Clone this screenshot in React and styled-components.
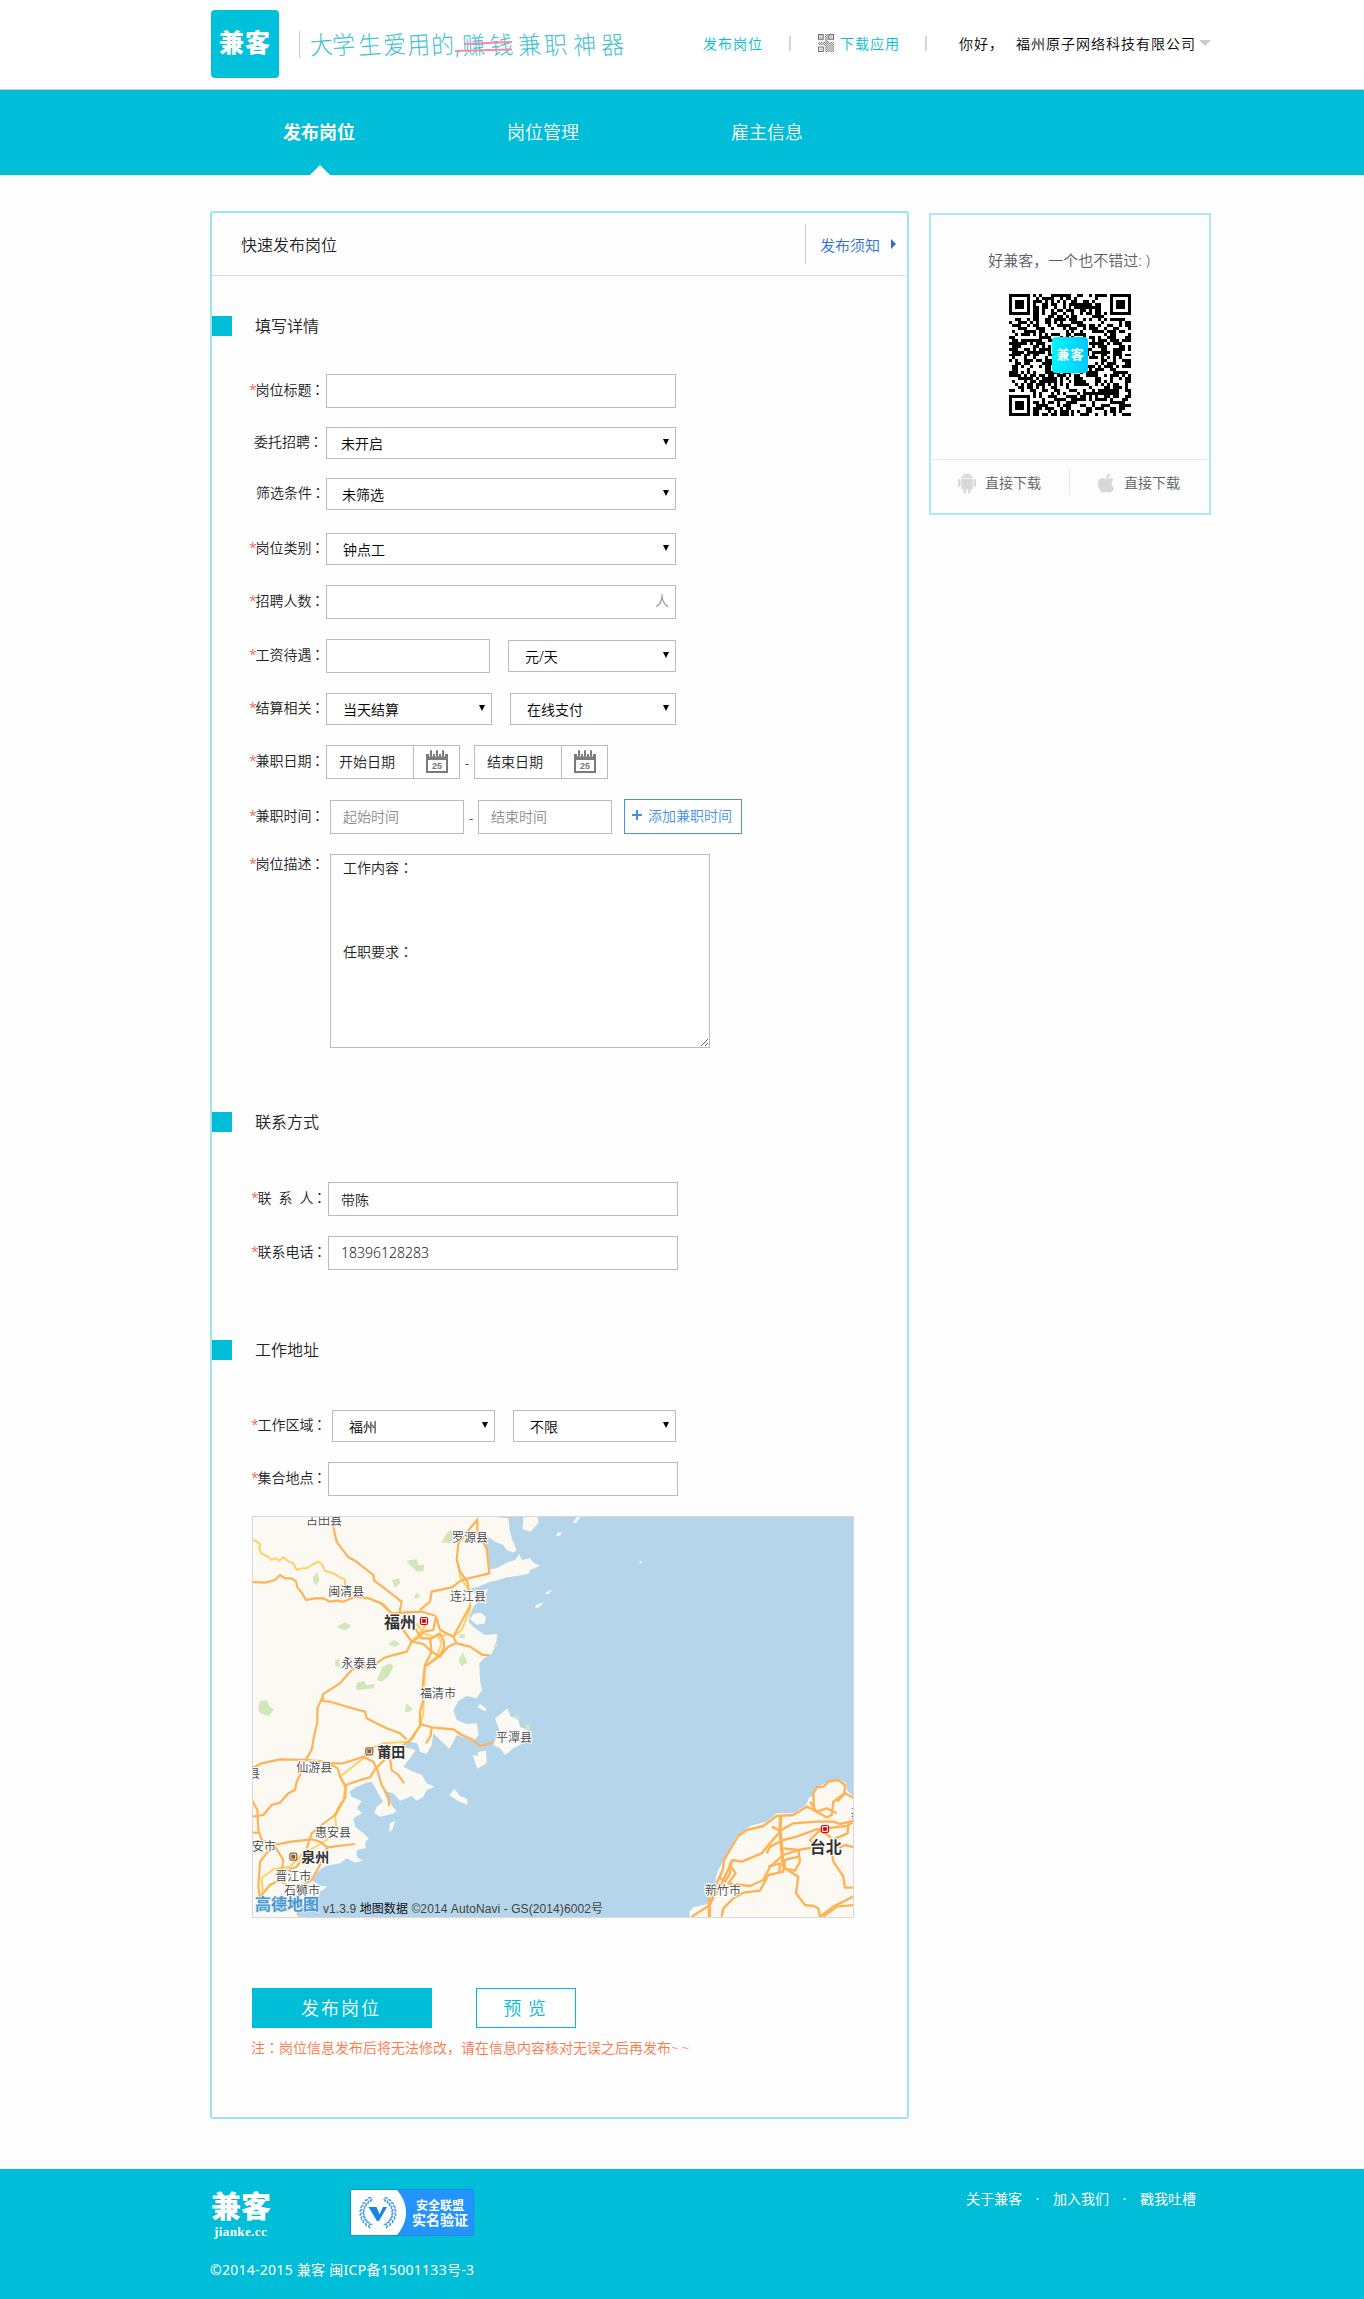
import React from "react";
import styled, { createGlobalStyle } from "styled-components";
import { AiFillAndroid, AiFillApple } from "react-icons/ai";

const CYAN = "#00bdd8";
const SANS = '"Noto Sans", "Noto Sans CJK SC", sans-serif';
const CJK_COLON = '"Noto Sans CJK JP", "Noto Sans CJK SC", sans-serif';

const Global = createGlobalStyle`
  *, *::before, *::after { box-sizing: border-box; }
  body { margin: 0; background: #fdfdfd; font-family: ${SANS}; font-size: 14px; font-weight: 350; color: #222; }
  input, textarea, button { font: inherit; margin: 0; }
`;

/* ---------- header ---------- */
const Header = styled.header`
  height: 90px;
  background: #fff;
  border-bottom: 1px solid #ccc;
  display: flex;
  padding: 10px 0 0 211px;
`;
const Logo = styled.div`
  width: 68px;
  height: 68px;
  border-radius: 4px;
  background: #00c1dc;
  color: #fff;
  font-weight: 900;
  font-size: 25px;
  letter-spacing: 1px;
  line-height: 65px;
  text-align: center;
`;
const Slogan = styled.div`
  margin: 21px 0 0 20px;
  width: 328px;
  height: 27px;
  border-left: 1px solid #ccc;
  padding-left: 9px;
  display: flex;
  font-size: 25px;
  line-height: 26px;
  color: #45bfd3;
  font-weight: 300;
  white-space: nowrap;
`;
const Glyph = styled.span`
  width: ${(p) => p.$w}px;
  transform: rotate(-4deg) scaleX(0.92);
`;
const Struck = styled.span`
  position: relative;
  display: flex;
  svg { position: absolute; left: -7px; top: 9px; }
`;
const TopNav = styled.nav`
  display: flex;
  align-items: center;
  height: 24px;
  margin: 21px 0 0 76px;
  letter-spacing: 1px;
  color: ${CYAN};
`;
const Bar = styled.i`
  width: 2px;
  height: 15px;
  background: #d8d4d6;
  margin: 0 ${(p) => p.$r}px 0 ${(p) => p.$l}px;
`;
const AppLink = styled.span`
  display: flex;
  align-items: center;
  gap: 6px;
  width: 82px;
`;
const Company = styled.span`
  display: flex;
  align-items: center;
  color: #000;
  span { width: 57px; }
`;
const Caret = styled.i`
  margin-left: 3px;
  border: 6px solid transparent;
  border-top-color: #ccc;
  border-bottom: 0;
`;
const MainNav = styled.nav`
  height: 85px;
  background: ${CYAN};
  display: flex;
  padding-left: 207px;
`;
const Tab = styled.a`
  position: relative;
  width: 224px;
  text-align: center;
  color: #fff;
  font-size: 18px;
  line-height: 84px;
  font-weight: ${(p) => (p.$active ? 700 : 350)};
  &::after {
    content: "";
    display: ${(p) => (p.$active ? "block" : "none")};
    position: absolute;
    left: 103px;
    bottom: 0;
    border: 10px solid transparent;
    border-bottom-color: #fdfdfd;
    border-top: 0;
  }
`;

/* ---------- page body ---------- */
const Main = styled.main`
  display: flex;
  align-items: flex-start;
  height: 1994px;
  padding: 36px 0 0 210px;
`;
const Panel = styled.section`
  width: 699px;
  height: 1908px;
  border: 2px solid #9de6ef;
  border-radius: 3px;
  background: #fefefe;
`;
const PanelHead = styled.div`
  height: 63px;
  border-bottom: 1px solid #ddd;
  margin-right: 1px;
  display: flex;
  align-items: center;
  justify-content: space-between;
  padding: 1px 10px 1px 29px;
  font-size: 16px;
`;
const Notice = styled.a`
  display: flex;
  align-items: center;
  height: 40px;
  border-left: 1px solid #ccc;
  padding-left: 14px;
  font-size: 15px;
  color: #2a6fdb;
  i {
    margin-left: 11px;
    border: 5px solid transparent;
    border-left-color: #2a6fdb;
    border-right: 0;
  }
`;
const SectionTitle = styled.h2`
  display: flex;
  align-items: center;
  height: 20px;
  margin: ${(p) => p.$top}px 0 0;
  padding-bottom: 2px;
  font-size: 16px;
  font-weight: 350;
  &::before {
    content: "";
    width: 20px;
    height: 20px;
    background: ${CYAN};
    margin: 0 23px -2px 0;
  }
`;
const Row = styled.div`
  display: flex;
  align-items: ${(p) => p.$align || "center"};
  height: ${(p) => p.$h || 34}px;
  margin-top: ${(p) => p.$top || 20}px;
`;
const LabelBox = styled.label`
  flex: none;
  width: ${(p) => p.$w}px;
  padding-left: ${(p) => p.$pad}px;
  height: 22px;
  line-height: 18px;
  white-space: pre;
  b { display: inline-block; width: 6.5px; font-weight: 350; color: #f5392c; }
  span { font-family: ${CJK_COLON}; margin-left: -1px; }
`;
const Input = styled.input`
  width: ${(p) => p.$w}px;
  height: 34px;
  border: 1px solid #bbb;
  background: #fff;
  padding: 0 12px 1px;
  color: #222;
  outline: 0;
  &::placeholder { color: #8c8c8c; opacity: 1; }
`;
const Unit = styled.div`
  width: 350px;
  height: 34px;
  border: 1px solid #bbb;
  background: #fff;
  color: #888;
  text-align: right;
  padding: 0 6px;
  line-height: 29px;
`;
const SelectBox = styled.div`
  width: ${(p) => p.$w}px;
  height: 32px;
  border: 1px solid #bbb;
  background: #fff;
  display: flex;
  align-items: center;
  justify-content: space-between;
  padding: 0 6px 0 ${(p) => p.$pad || 16}px;
  color: #000;
  i {
    margin-top: -2px;
    border: 3px solid transparent;
    border-top: 6px solid #000;
    border-bottom: 0;
  }
`;
const Gap = styled.span`
  width: ${(p) => p.$w}px;
  text-align: center;
`;
const DateBox = styled.div`
  width: 134px;
  height: 34px;
  border: 1px solid #bbb;
  background: #fff;
  display: flex;
  align-items: center;
  padding-left: 12px;
  > span { width: 74px; margin-top: -2px; }
  > i {
    width: 46px;
    height: 32px;
    border-left: 1px solid #bbb;
    padding: 4px 0 0 12px;
  }
  svg { display: block; }
`;
const AddButton = styled.button`
  width: 118px;
  height: 35px;
  margin: -1px 0 0 12px;
  border: 1px solid #4a90e2;
  background: #fff;
  color: #4a90e2;
  padding: 0 0 3px 7px;
  display: flex;
  align-items: center;
  gap: 6px;
`;
const TextArea = styled.textarea`
  width: 380px;
  height: 194px;
  border: 1px solid #bbb;
  background: #fff;
  padding: 2px 12px 0;
  line-height: 21px;
  color: #222;
  outline: 0;
  font-family: ${CJK_COLON};
`;
const MapFrame = styled.div`
  width: 602px;
  height: 402px;
  margin: 20px 0 0 40px;
  border: 1px solid #d9d9d9;
  svg { display: block; }
`;
const Actions = styled.div`
  display: flex;
  gap: 44px;
  margin: 70px 0 0 40px;
`;
const Action = styled.button`
  width: ${(p) => (p.$primary ? 180 : 100)}px;
  height: 40px;
  border: 1px solid ${CYAN};
  background: ${(p) => (p.$primary ? CYAN : "#fff")};
  color: ${(p) => (p.$primary ? "#fff" : CYAN)};
  font-size: 18px;
  letter-spacing: ${(p) => (p.$primary ? 2 : 1)}px;
  padding: 0 2px 0 0;
  line-height: 36px;
`;
const Warn = styled.p`
  margin: 9px 0 0 39px;
  line-height: 20px;
  color: #ff7647;
  span { font-family: ${CJK_COLON}; }
  i { font-style: normal; letter-spacing: 2.5px; }
`;

/* ---------- side card ---------- */
const Card = styled.aside`
  width: 282px;
  height: 302px;
  margin: 2px 0 0 20px;
  border: 2px solid #b1e9f1;
  color: #5c5c66;
  display: flex;
  flex-direction: column;
  align-items: center;
`;
const CardText = styled.div`
  margin: 33px 2px 0 0;
  font-size: 15px;
  line-height: 24px;
`;
const QrWrap = styled.div`
  display: grid;
  place-items: center;
  margin: 22px 0 43px;
  > * { grid-area: 1 / 1; }
`;
const QrLogo = styled.div`
  width: 36px;
  height: 36px;
  border-radius: 4px;
  background: linear-gradient(90deg, #00f6ff, #00c8ff);
  color: #fff;
  font-weight: 700;
  font-size: 13px;
  letter-spacing: 1px;
  padding-left: 1px;
  line-height: 34px;
  text-align: center;
`;
const Downloads = styled.div`
  width: 278px;
  border-top: 1px solid #eaeaea;
  display: flex;
  padding-top: 10px;
`;
const Download = styled.a`
  width: ${(p) => (p.$first ? 139 : 138)}px;
  height: 25px;
  border-right: ${(p) => (p.$first ? "1px solid #eaeaea" : "0")};
  padding-left: 24px;
  display: flex;
  align-items: center;
  gap: 6px;
  svg { color: #d8d8d8; }
  span { margin-top: -1px; }
`;

/* ---------- footer ---------- */
const Footer = styled.footer`
  height: 130px;
  background: ${CYAN};
  color: #fff;
  font-weight: 400;
  display: flex;
  justify-content: space-between;
  padding: 19px 167px 0 210px;
`;
const FooterBrands = styled.div`
  display: flex;
  height: 49px;
`;
const FooterLogo = styled.div`
  width: 140px;
  padding-left: 1px;
  font-size: 30px;
  font-weight: 900;
  line-height: 35px;
  small {
    display: block;
    padding-left: 3px;
    margin-top: 2px;
    font: 600 13px/14px "Liberation Serif", serif;
    letter-spacing: 0.4px;
  }
`;
const Badge = styled.div`
  width: 124px;
  height: 47px;
  margin-top: 1px;
  border: 1px solid #1f8ae6;
  border-radius: 2px;
  background: #2593fc;
  display: flex;
  align-items: center;
  overflow: hidden;
  font-weight: 700;
  div { padding-left: 6px; text-align: center; }
  p { margin: 0; font-size: 12px; line-height: 15px; }
  p + p { font-size: 14px; line-height: 14px; }
`;
const Copyright = styled.div`
  margin-top: 23px;
  line-height: 20px;
  letter-spacing: 0.27px;
`;
const FooterLinks = styled.div`
  display: flex;
  height: 22px;
  line-height: 22px;
  padding-right: 1px;
  span { width: 31px; text-align: center; }
`;

/* ---------- drawings ---------- */
function SmallQr() {
  const dots = [];
  for (let y = 0; y < 16; y++)
    for (let x = 0; x < 14; x++)
      if (!((x < 6 && y < 7) || (x > 8 && y < 7) || (x < 6 && y > 9)) && (x + y) % 2 === 0)
        dots.push(<rect key={x + "-" + y} x={x} y={y} width="1" height="1" />);
  return (
    <svg width="16" height="18" viewBox="0 0 14 16" fill="#707070" preserveAspectRatio="none">
      {dots}
      {[[0, 0], [9, 0], [0, 11]].map(([x, y]) => (
        <g key={x + "," + y}>
          <path fillRule="evenodd" d={`M${x} ${y}h5v5h-5zM${x + 1} ${y + 1}v3h3v-3z`} />
          <rect x={x + 2} y={y + 2} width="1" height="1" />
        </g>
      ))}
    </svg>
  );
}

const QR_SIZE = 41;
const inFinder = (x, y) => (x < 8 && y < 8) || (x > 32 && y < 8) || (x < 8 && y > 32);
function QrCode() {
  let seed = 20150411;
  let d = "";
  for (let y = 0; y < QR_SIZE; y++)
    for (let x = 0; x < QR_SIZE; x++) {
      seed = (seed * 16807) % 2147483647;
      if (!inFinder(x, y) && seed / 2147483647 > 0.48) d += `M${x} ${y}h1v1h-1z`;
    }
  return (
    <svg width="122" height="122" viewBox="0 0 41 41" shapeRendering="crispEdges">
      <rect width="41" height="41" fill="#fff" />
      <path d={d} />
      {[[0, 0], [34, 0], [0, 34]].map(([x, y]) => (
        <g key={x + "," + y}>
          <path fillRule="evenodd" d={`M${x} ${y}h7v7h-7zM${x + 1} ${y + 1}v5h5v-5z`} />
          <rect x={x + 2} y={y + 2} width="3" height="3" />
        </g>
      ))}
    </svg>
  );
}

function Calendar() {
  return (
    <svg width="22" height="24" viewBox="0 0 22 24">
      <path d="M0 4h22v19H0z M2 10v11h18V10z" fill="#7b7b7b" fillRule="evenodd" />
      <path d="M5 1.500v5M11 1.500v5M17 1.500v5" stroke="#fff" strokeWidth="4" />
      <path d="M5 1v5M11 1v5M17 1v5" stroke="#7b7b7b" strokeWidth="2" strokeLinecap="round" />
      <text x="11" y="19" fontSize="9" fontWeight="700" fontStyle="normal" fontFamily="Liberation Sans, sans-serif" fill="#777" textAnchor="middle">25</text>
    </svg>
  );
}

function Wreath() {
  const leaves = [];
  for (let i = 0; i < 10; i++) {
    const a = ((-62 + i * 13.5) * Math.PI) / 180;
    for (const s of [-1, 1])
      for (const r of [14.5, 17.5]) {
        const x = 27 + s * Math.cos(a) * r;
        const y = 22.5 + Math.sin(a) * r * 0.95;
        const turn = (Math.atan2(Math.sin(a), s * Math.cos(a)) * 180) / Math.PI + 90 + s * (r > 16 ? -28 : 28);
        leaves.push(<ellipse key={i + "_" + s + "_" + r} cx={x} cy={y} rx="2" ry="0.9" transform={`rotate(${turn} ${x} ${y})`} />);
      }
  }
  return (
    <svg width="55" height="45">
      <path d="M0 0H46C58 14 58 31 46 45H0Z" fill="#fff" />
      <g fill="#4d9fe6">{leaves}</g>
      <path d="M17.500 17H25.500L28.500 24.500L32 17H36L28 31H26Z" fill="#1684e0" />
    </svg>
  );
}

/* Map artwork is digitised at three units per pixel. */
const MAINLAND =
  "36,48 735,48 805,55 808,85 815,115 830,150 820,158 800,150 790,135 765,125 745,110 722,100 735,125 745,170 750,208 770,205 800,188 825,180 838,162 845,180 870,175 882,190 900,196 885,205 870,210 865,222 830,228 800,232 775,240 750,245 715,260 692,265 705,280 730,272 745,265 735,290 740,312 715,305 700,320 690,345 685,365 705,385 735,405 772,402 768,432 755,462 735,472 718,490 720,540 726,570 710,595 680,588 655,603 640,630 650,660 680,672 710,670 716,706 700,722 670,712 650,705 640,725 628,746 600,720 580,700 575,735 560,762 540,755 532,730 505,725 492,742 527,750 510,775 490,800 520,815 545,824 560,850 584,860 560,870 550,890 530,902 515,888 500,895 480,902 460,880 430,872 440,895 470,935 455,942 420,950 403,940 410,920 430,905 420,890 405,862 395,846 380,848 350,860 328,875 335,890 365,903 350,925 367,940 340,955 345,980 370,1000 386,1015 375,1030 378,1045 350,1050 350,1070 368,1082 345,1088 320,1075 300,1090 260,1097 245,1105 230,1120 215,1140 240,1157 262,1160 240,1175 235,1195 200,1200 175,1235 172,1254 36,1254";
const ISLANDS = [
  "690,358 700,342 722,338 738,350 735,370 710,374",
  "765,655 785,640 802,625 812,650 835,658 840,680 862,690 878,700 860,725 845,732 820,745 796,765 780,745 760,735 770,710 778,690",
  "698,765 712,768 715,755 738,752 740,790 712,806",
  "628,885 643,867 660,888 682,897 682,915 655,903",
  "848,88 850,52 892,50 896,68 872,95",
  "448,996 450,970 466,962 456,990",
  "885,325 888,315 910,307 898,322",
  "917,282 920,275 937,270 925,282",
  "712,622 720,612 740,628 735,634",
];
const GREENS = [
  "605,128 620,98 632,92 650,100 636,128",
  "500,182 530,178 535,195 553,195 550,214 530,214 512,198",
  "455,240 478,235 480,250 465,264",
  "218,232 232,216 238,240 230,257 220,246",
  "292,380 315,366 334,378 318,390 300,386",
  "445,432 463,420 480,432 465,442",
  "522,288 533,278 540,292 526,296",
  "410,540 428,500 450,490 460,500 445,530 425,545",
  "348,568 350,548 372,543 380,556 403,552 402,565 376,568 358,570",
  "54,625 60,603 80,601 90,620 102,628 85,648 60,640",
  "285,482 297,476 300,500 287,500",
  "655,482 668,456 682,488 665,497",
  "495,635 498,610 520,628 505,636",
  "760,440 768,428 774,436 763,446",
  "658,415 660,402 674,402 674,415",
  "856,688 858,671 870,674 868,690",
  "820,652 828,645 838,652 832,660",
];
const YELLOW_ROADS = [
  "36,118 50,125 60,132 58,148 64,160 80,168 95,180 105,174 118,182 130,172 145,184 160,190 170,210 185,205 200,205 215,195 235,185 245,192 255,213 280,220 300,232 315,238 315,262 290,290",
  "395,300 430,312 450,335",
  "655,190 660,230 690,275 690,330 665,390 640,410",
  "560,370 540,400 510,430",
  "590,400 605,430 590,470 555,500 550,640 540,680 505,725 430,730 400,742 370,775 300,830 315,860 310,905 285,950 290,985 260,1020 210,1050",
  "200,1050 150,1100 100,1108 65,1135 70,1200",
  "530,370 550,400 580,410 620,405",
];
const ORANGE_ROADS = [
  "280,80 290,125 325,172 345,182 400,225 403,243 440,270 485,305 478,340",
  "36,246 75,248 105,240 120,225 135,235 155,235 168,244 172,262 185,278 198,300 225,295 250,295 270,305 290,302 310,305 345,290 385,295 420,308 455,340 500,337 545,335 588,348",
  "540,330 570,305 575,275 635,262 665,240 748,220 740,145 712,100 712,55",
  "712,60 690,85 655,130 650,180 660,215 682,245 690,290",
  "692,315 670,355 640,410 600,390 588,350",
  "640,410 650,430 690,440 728,465 748,465",
  "335,510 300,550 248,583 248,603 270,605 345,627 375,635 380,655 400,665 440,685 480,700 500,718",
  "248,590 232,625 232,665 222,710 215,750 190,790 180,825 170,845 165,870 145,880 120,908 95,915 70,945 36,950",
  "335,508 400,498 430,475 450,468 500,455 515,425 490,390 480,360",
  "515,425 550,432 575,455 600,470 625,440 650,428",
  "588,350 580,390 550,395 540,410 515,425",
  "525,385 545,415 575,415 600,400 612,425 612,445 597,470 555,500",
  "570,415 575,455 555,495 548,555 550,600 540,635 540,675 515,718",
  "540,672 575,682 640,688 665,705 695,718 720,738 758,728",
  "575,682 572,708 558,730",
  "36,805 65,790 120,778 200,780 240,783 265,790 310,790 370,770 400,785 412,810 425,855 445,890 447,918",
  "515,718 475,745 435,778 405,808 390,832 355,842 318,855 315,895 300,915 285,945 245,975 215,1000 200,1045",
  "450,775 455,810 475,825 493,850",
  "265,790 293,805 300,830 318,860",
  "36,900 52,930 55,990 65,1020 100,1035 155,1025 215,1018 240,1025 262,1042 345,1032",
  "36,998 60,998",
  "105,1040 130,1080 125,1115 170,1100 200,1060",
  "100,1035 60,1085 55,1160 60,1195",
  "60,1190 90,1155 120,1140 155,1165 175,1245",
  "262,1042 240,1095 215,1140 170,1165",
];
const TAIWAN =
  "420,1254 418,1235 430,1222 470,1213 495,1180 498,1130 505,1110 518,1085 540,1048 560,1008 600,978 650,965 680,940 730,940 768,915 778,892 790,888 792,870 830,845 865,837 888,848 890,870 914,895 914,1254";
const TAIWAN_ROADS = [
  "425,1250 480,1215 500,1150 518,1110 522,1080 540,1050 565,1008 590,990 640,978 680,948 730,945 770,920 792,930 790,880 800,862 820,860 835,845 865,840 885,855 883,880 850,905 845,945 830,952 790,930",
  "480,1250 478,1215 515,1150 548,1080 575,1085 635,1060 660,1030 690,995",
  "665,980 690,992 730,970 800,965 850,965 870,972 912,962",
  "650,1060 660,1040 700,1020 740,1010 800,988 890,978 912,965",
  "545,1082 540,1095 557,1120 535,1150 600,1158 640,1140 660,1100 700,1065 745,1050 790,1042",
  "515,1250 520,1225 550,1195 580,1178 630,1172 655,1125 700,1115 705,1080 745,1070",
  "700,1080 705,1105 745,1130 738,1180 765,1215 790,1218 805,1225 810,1250 850,1220 880,1205 912,1188",
  "780,905 800,935 830,925 860,940",
  "862,905 885,880 912,895",
  "800,1045 780,1020 810,990 840,1010 850,1085 880,1130 885,1163 912,1163",
  "895,970 893,1000 850,1018",
  "865,1045 885,1035 912,1042",
  "505,1130 525,1145 540,1120 540,1090",
  "655,1100 690,1090 688,1115",
  "820,1250 860,1220 912,1215",
  "700,1045 745,1050 750,1085 735,1112 700,1105",
];
const LABELS = [
  [198, 74, "古田县"], [636, 125, "罗源县"], [265, 288, "闽清县"], [630, 303, "连江县"],
  [304, 504, "永泰县"], [540, 595, "福清市"], [768, 727, "平潭县"], [169, 817, "仙游县"],
  [24, 833, "县"], [225, 1011, "惠安县"], [36, 1053, "安市"], [106, 1143, "晋江市"],
  [132, 1186, "石狮市"], [1395, 1186, "新竹市"], [1832, 953, "基"],
];
const CITIES = [
  [432, 384, "福州", 16], [412, 770, "莆田", 14], [184, 1085, "泉州", 14], [1709, 1058, "台北", 16],
];

function Roads({ list, color, width }) {
  return (
    <g fill="none" stroke={color} strokeWidth={width} strokeLinejoin="round">
      {list.map((r) => <path key={r} d={"M" + r} />)}
    </g>
  );
}

function Pin({ x, y, color }) {
  return (
    <g transform={`translate(${x / 3 - 13} ${y / 3 - 17})`} fill="#fff" stroke={color}>
      <rect x="-3.5" y="-3.5" width="7" height="7" rx="1.5" strokeWidth="1.2" />
      <rect x="-1.7" y="-1.7" width="3.4" height="3.4" fill={color} strokeWidth="0.5" />
    </g>
  );
}

function CoastMap() {
  return (
    <svg width="600" height="400" viewBox="0 0 600 400" fontFamily={'"Noto Sans CJK SC", sans-serif'}>
      <rect width="600" height="400" fill="#b5d5ea" />
      <g transform="translate(-13 -17) scale(0.33333)">
        <g fill="#fcf9f2">
          <polygon points={MAINLAND} />
          {ISLANDS.map((p) => <polygon key={p} points={p} />)}
        </g>
        <g fill="#cfe7ba">{GREENS.map((p) => <polygon key={p} points={p} />)}</g>
        <Roads list={YELLOW_ROADS} color="#ffd066" width="6" />
        <Roads list={ORANGE_ROADS} color="#ffb155" width="6.5" />
      </g>
      <g transform="translate(297 -17) scale(0.33333)">
        <polygon points={TAIWAN} fill="#fcf9f2" />
        <g fill="#fcf9f2">
          <polygon points="69,68 80,50 90,52 78,70" />
          <polygon points="18,108 22,98 37,97 30,107" />
          <polygon points="266,190 272,182 277,190" />
        </g>
        <Roads list={TAIWAN_ROADS} color="#ffb155" width="7" />
        <path d="M692 945L690 990L700 1100M478 1195V1250" stroke="#ffb155" strokeWidth="10" fill="none" />
      </g>
      <Pin x={552} y={363} color="#d00" />
      <Pin x={1755} y={987} color="#d00" />
      <Pin x={388} y={754} color="#8a5a2a" />
      <Pin x={160} y={1070} color="#8a5a2a" />
      <g fill="#444" stroke="#fff" strokeWidth="2" paintOrder="stroke" fontSize="12" fontWeight="350">
        {LABELS.map(([x, y, t]) => <text key={t + x} x={x / 3 - 13} y={y / 3 - 17}>{t}</text>)}
      </g>
      <g fill="#333" stroke="#fff" strokeWidth="2" paintOrder="stroke" fontWeight="700">
        {CITIES.map(([x, y, t, size]) => <text key={t} x={x / 3 - 13} y={y / 3 - 17} fontSize={size}>{t}</text>)}
      </g>
      <text x="2" y="393" fontSize="16" fontWeight="700" fill="#4b97cf" stroke="#dceefa" strokeWidth="1.5" paintOrder="stroke">高德地图</text>
      <text x="70" y="396" fontSize="12" fill="#444" fontWeight="400" textLength="280" fontFamily={'"Liberation Sans", "Noto Sans CJK SC", sans-serif'}>
        v1.3.9 <tspan fill="#111">地图数据</tspan> ©2014 AutoNavi - GS(2014)6002号
      </text>
    </svg>
  );
}

/* ---------- form pieces ---------- */
function Label({ children, star = true, pad = 37, w = 114 }) {
  return (
    <LabelBox $pad={pad} $w={w}>
      {star && <b>*</b>}
      {children}
      <span>：</span>
    </LabelBox>
  );
}
function Select({ w = 350, pad, children }) {
  return (
    <SelectBox $w={w} $pad={pad}>
      {children}
      <i />
    </SelectBox>
  );
}
function DatePick({ children }) {
  return (
    <DateBox>
      <span>{children}</span>
      <i><Calendar /></i>
    </DateBox>
  );
}

const SLOGAN_START = [["大", 22], ["学", 26], ["生", 25], ["爱", 24], ["用", 24], ["的", 24], [",", 7]];
const SLOGAN_END = [["兼", 26], ["职", 29], ["神", 28], ["器", 24]];

export default function App() {
  return (
    <>
      <Global />
      <Header>
        <Logo>兼客</Logo>
        <Slogan>
          {SLOGAN_START.map(([c, w]) => <Glyph key={c} $w={w}>{c}</Glyph>)}
          <Struck>
            <Glyph $w={28}>赚</Glyph>
            <Glyph $w={28}>钱</Glyph>
            <svg width="60" height="16" stroke="#f58aa8" strokeWidth="2" fill="none">
              <path d="M10 4L58 2M1 11L58 9.500" />
            </svg>
          </Struck>
          {SLOGAN_END.map(([c, w]) => <Glyph key={c} $w={w}>{c}</Glyph>)}
        </Slogan>
        <TopNav>
          <span>发布岗位</span>
          <Bar $l={26} $r={27} />
          <AppLink><SmallQr />下载应用</AppLink>
          <Bar $l={25} $r={32} />
          <Company><span>你好，</span>福州原子网络科技有限公司<Caret /></Company>
        </TopNav>
      </Header>
      <MainNav>
        <Tab $active>发布岗位</Tab>
        <Tab>岗位管理</Tab>
        <Tab>雇主信息</Tab>
      </MainNav>

      <Main>
        <Panel>
          <PanelHead>
            快速发布岗位
            <Notice>发布须知<i /></Notice>
          </PanelHead>

          <SectionTitle $top={40}>填写详情</SectionTitle>
          <Row $top={38}><Label>岗位标题</Label><Input $w={350} /></Row>
          <Row $top={19} $h={32}><Label star={false} pad={42}>委托招聘</Label><Select pad={14}>未开启</Select></Row>
          <Row $top={19} $h={32}><Label star={false} pad={44}>筛选条件</Label><Select pad={15}>未筛选</Select></Row>
          <Row $top={23} $h={32}><Label>岗位类别</Label><Select>钟点工</Select></Row>
          <Row><Label>招聘人数</Label><Unit>人</Unit></Row>
          <Row><Label>工资待遇</Label><Input $w={164} /><Gap $w={18} /><Select w={168}>元/天</Select></Row>
          <Row $h={32}><Label>结算相关</Label><Select w={166}>当天结算</Select><Gap $w={18} /><Select w={166}>在线支付</Select></Row>
          <Row><Label>兼职日期</Label><DatePick>开始日期</DatePick><Gap $w={14}>-</Gap><DatePick>结束日期</DatePick></Row>
          <Row $top={21}>
            <Label w={118}>兼职时间</Label>
            <Input $w={134} placeholder="起始时间" />
            <Gap $w={14}>-</Gap>
            <Input $w={134} placeholder="结束时间" />
            <AddButton>
              <svg width="10" height="10" stroke="#4a90e2" strokeWidth="2"><path d="M5 0V10M0 5H10" /></svg>
              添加兼职时间
            </AddButton>
          </Row>
          <Row $h={194} $align="flex-start">
            <Label w={118}>岗位描述</Label>
            <TextArea defaultValue={"工作内容：\n\n\n\n任职要求："} />
          </Row>

          <SectionTitle $top={64}>联系方式</SectionTitle>
          <Row $top={50}><Label pad={39} w={116}>{"联\u2002系\u2002人"}</Label><Input $w={350} defaultValue="带陈" /></Row>
          <Row><Label pad={39} w={116}>联系电话</Label><Input $w={350} defaultValue="18396128283" /></Row>

          <SectionTitle $top={70}>工作地址</SectionTitle>
          <Row $top={50} $h={32}><Label pad={39} w={120}>工作区域</Label><Select w={163}>福州</Select><Gap $w={18} /><Select w={163}>不限</Select></Row>
          <Row><Label pad={39} w={116}>集合地点</Label><Input $w={350} /></Row>
          <MapFrame><CoastMap /></MapFrame>

          <Actions>
            <Action $primary>发布岗位</Action>
            <Action>预 览</Action>
          </Actions>
          <Warn>注<span>：</span>岗位信息发布后将无法修改，请在信息内容核对无误之后再发布<i>~~</i></Warn>
        </Panel>

        <Card>
          <CardText>好兼客，一个也不错过: )</CardText>
          <QrWrap>
            <QrCode />
            <QrLogo>兼客</QrLogo>
          </QrWrap>
          <Downloads>
            <Download $first><AiFillAndroid size={24} /><span>直接下载</span></Download>
            <Download><AiFillApple size={24} /><span>直接下载</span></Download>
          </Downloads>
        </Card>
      </Main>

      <Footer>
        <div>
          <FooterBrands>
            <FooterLogo>兼客<small>jianke.cc</small></FooterLogo>
            <Badge>
              <Wreath />
              <div><p>安全联盟</p><p>实名验证</p></div>
            </Badge>
          </FooterBrands>
          <Copyright>©2014-2015 兼客 闽ICP备15001133号-3</Copyright>
        </div>
        <FooterLinks>关于兼客<span>·</span>加入我们<span>·</span>戳我吐槽</FooterLinks>
      </Footer>
    </>
  );
}
